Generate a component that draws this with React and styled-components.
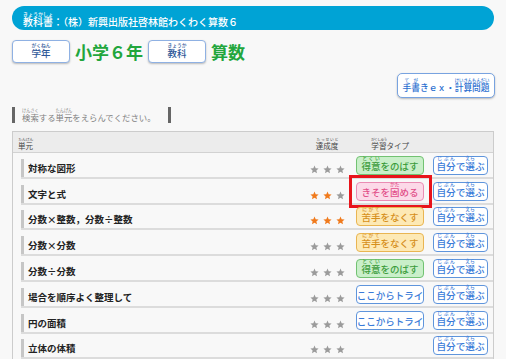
import React from 'react';
import styled, { createGlobalStyle, css } from 'styled-components';

const GlobalStyle = createGlobalStyle`
  html, body {
    margin: 0;
    padding: 0;
    background: #f8f8f8;
  }
  body {
    font-family: "Noto Sans CJK JP", "Noto Sans", sans-serif;
    overflow: hidden;
  }
`;

const Rt = styled.rt`
  font-size: 50%;
  line-height: 1;
  letter-spacing: ${(p) => (p.$tight ? '-0.6px' : '0')};
`;

const Page = styled.div`
  width: 506px;
  height: 359px;
  overflow: hidden;
  padding: 6px 12px 0;
  box-sizing: border-box;
`;

const TitleBar = styled.div`
  height: 24px;
  border-radius: 12px;
  background: #00a3d5;
  color: #fff;
  display: flex;
  align-items: flex-end;
  padding: 0 0 2px 11px;
  box-sizing: border-box;
  font-size: 10px;
  font-weight: 500;
  line-height: 12px;
`;

const SelectRow = styled.div`
  display: flex;
  align-items: center;
  gap: 5px;
  height: 23px;
  margin-top: 10px;
`;

const LabelButton = styled.div`
  width: 58px;
  height: 23px;
  box-sizing: border-box;
  border: 1px solid #8fb1e3;
  border-radius: 4px;
  background: #fff;
  box-shadow: 0 1px 2px rgba(0, 0, 0, 0.25);
  display: flex;
  align-items: flex-end;
  justify-content: center;
  padding-bottom: 3px;
  font-size: 9.5px;
  font-weight: 500;
  line-height: 11px;
  color: #2d5797;
`;

const GreenText = styled.div`
  font-size: 17px;
  font-weight: 700;
  line-height: 23px;
  color: #22a63c;
`;

const ToolRow = styled.div`
  display: flex;
  justify-content: flex-end;
  margin-top: 10px;
  margin-right: -1px;
`;

const LinkButton = styled.div`
  width: 98px;
  height: 25px;
  box-sizing: border-box;
  border: 1.5px solid #78a3e0;
  border-radius: 5px;
  background: #fff;
  box-shadow: 0 1px 2px rgba(0, 0, 0, 0.25);
  display: flex;
  align-items: flex-end;
  justify-content: center;
  padding-bottom: 4px;
  font-size: 8.7px;
  font-weight: 500;
  line-height: 10px;
  color: #2b6fd0;
`;

const SearchLabel = styled.div`
  display: inline-flex;
  align-items: flex-end;
  height: 16px;
  box-sizing: border-box;
  margin-top: 9px;
  padding: 0 12px 1px 7px;
  border-left: 3px solid #666;
  border-right: 3px solid #666;
  font-size: 8.4px;
  line-height: 10px;
  color: #808080;
`;

const Table = styled.div`
  margin-top: 5px;
  border: 1px solid #ccc;
  border-bottom: none;
`;

const HeadRow = styled.div`
  height: 21px;
  box-sizing: border-box;
  background: #ececec;
  border-bottom: 1px solid #d2d2d2;
  display: flex;
  align-items: flex-end;
  padding: 0 5px 2px 5px;
  font-size: 7.5px;
  line-height: 9px;
  color: #444;
`;

const NameCol = styled.div`
  flex: 1;
`;

const StarCol = styled.div`
  width: 38px;
  margin-right: 10px;
  display: flex;
  justify-content: center;
`;

const TypeCol = styled.div`
  width: 68px;
  margin-right: 9px;
  display: flex;
  justify-content: center;
`;

const SelfCol = styled.div`
  width: 55px;
`;

const Row = styled.div`
  margin-left: 8px;
  height: 25.8px;
  box-sizing: border-box;
  border-bottom: 2px solid #dcdcdc;
  display: flex;
  align-items: flex-end;
  padding: 0 5px 2px 0;
`;

const UnitName = styled.div`
  flex: 1;
  height: 18px;
  box-sizing: border-box;
  margin-bottom: -2px;
  border-left: 3px solid #c6c6c6;
  padding: 0 0 3px 4px;
  display: flex;
  align-items: flex-end;
  font-size: 9.5px;
  font-weight: 700;
  line-height: 11px;
  color: #222;
`;

const Stars = styled.div`
  width: 38px;
  margin: 0 10px 1px 0;
  display: flex;
  justify-content: center;
  gap: 4px;
`;

const tones = {
  green: css`
    background: #c9efc9;
    border-color: #72c272;
    color: #3c9c3c;
  `,
  pink: css`
    background: #fcd9e8;
    border-color: #ea8cb4;
    color: #e2508a;
  `,
  yellow: css`
    background: #fde9b5;
    border-color: #e9b552;
    color: #d68f1b;
  `,
  white: css`
    background: #fff;
    border-color: #5f95dc;
    color: #3a7bd8;
  `,
};

const TypeSlot = styled.div`
  width: 68px;
  height: 19px;
  margin-right: 9px;
  position: relative;
`;

const PillButton = styled.div`
  width: ${(p) => p.$w}px;
  height: 19px;
  box-sizing: border-box;
  border: 1.3px solid;
  border-radius: 4px;
  display: flex;
  align-items: flex-end;
  justify-content: center;
  padding-bottom: 2px;
  font-size: ${(p) => p.$size}px;
  font-weight: 500;
  line-height: 11px;
  white-space: nowrap;
  ${(p) => tones[p.$tone]}
`;

const Highlight = styled.div`
  position: absolute;
  left: -7px;
  top: -7px;
  right: -8px;
  bottom: -7px;
  border: 3px solid #e8141b;
  pointer-events: none;
`;

const R = ({ b, t, tight }) => (
  <ruby>
    {b}
    <Rt $tight={tight}>{t}</Rt>
  </ruby>
);

const Star = ({ on }) => (
  <svg width="9" height="9" viewBox="0 0 24 24">
    <path
      d="M12 1.5l3.1 7.2 7.8.7-5.9 5.2 1.8 7.7L12 18.3l-6.8 4 1.8-7.7-5.9-5.2 7.8-.7z"
      fill={on ? '#f07a1c' : '#9b9b9b'}
    />
  </svg>
);

const typeLabels = {
  green: (
    <>
      <R b="得意" t="とくい" />をのばす
    </>
  ),
  pink: (
    <>
      きそを<R b="固" t="かた" />める
    </>
  ),
  yellow: (
    <>
      <R b="苦手" t="にがて" />をなくす
    </>
  ),
  white: <>ここからトライ</>,
};

const units = [
  { name: '対称な図形', stars: 0, type: 'green' },
  { name: '文字と式', stars: 2, type: 'pink', mark: true },
  { name: '分数×整数，分数÷整数', stars: 3, type: 'yellow' },
  { name: '分数×分数', stars: 0, type: 'yellow' },
  { name: '分数÷分数', stars: 0, type: 'green' },
  { name: '場合を順序よく整理して', stars: 0, type: 'white' },
  { name: '円の面積', stars: 0, type: 'white' },
  { name: '立体の体積', stars: 0, type: null },
  { name: '比例と反比例', stars: 0, type: 'green' },
];

export default function App() {
  return (
    <Page>
      <GlobalStyle />
      <TitleBar>
        <span>
          <R b="教科書" t="きょうかしょ" />：（株）新興出版社啓林館わくわく算数６
        </span>
      </TitleBar>

      <SelectRow>
        <LabelButton>
          <R b="学年" t="がくねん" />
        </LabelButton>
        <GreenText>小学６年</GreenText>
        <LabelButton>
          <R b="教科" t="きょうか" />
        </LabelButton>
        <GreenText>算数</GreenText>
      </SelectRow>

      <ToolRow>
        <LinkButton>
          <span>
            <R b="手" t="て" />
            <R b="書" t="が" />きｅｘ・<R b="計算問題" t="けいさんもんだい" />
          </span>
        </LinkButton>
      </ToolRow>

      <SearchLabel>
        <span>
          <R b="検索" t="けんさく" />する<R b="単元" t="たんげん" />をえらんでください。
        </span>
      </SearchLabel>

      <Table>
        <HeadRow>
          <NameCol>
            <R b="単元" t="たんげん" tight />
          </NameCol>
          <StarCol>
            <R b="達成度" t="たっせいど" tight />
          </StarCol>
          <TypeCol>
            <span>
              <R b="学習" t="がくしゅう" tight />タイプ
            </span>
          </TypeCol>
          <SelfCol />
        </HeadRow>

        {units.map((u) => (
          <Row key={u.name}>
            <UnitName>{u.name}</UnitName>
            <Stars>
              {[0, 1, 2].map((i) => (
                <Star key={i} on={i < u.stars} />
              ))}
            </Stars>
            <TypeSlot>
              {u.type && (
                <PillButton $tone={u.type} $w={68} $size={9.5}>
                  <span>{typeLabels[u.type]}</span>
                </PillButton>
              )}
              {u.mark && <Highlight />}
            </TypeSlot>
            <PillButton $tone="white" $w={55} $size={9.6}>
              <span>
                <R b="自分" t="じぶん" />で<R b="選" t="えら" />ぶ
              </span>
            </PillButton>
          </Row>
        ))}
      </Table>
    </Page>
  );
}
